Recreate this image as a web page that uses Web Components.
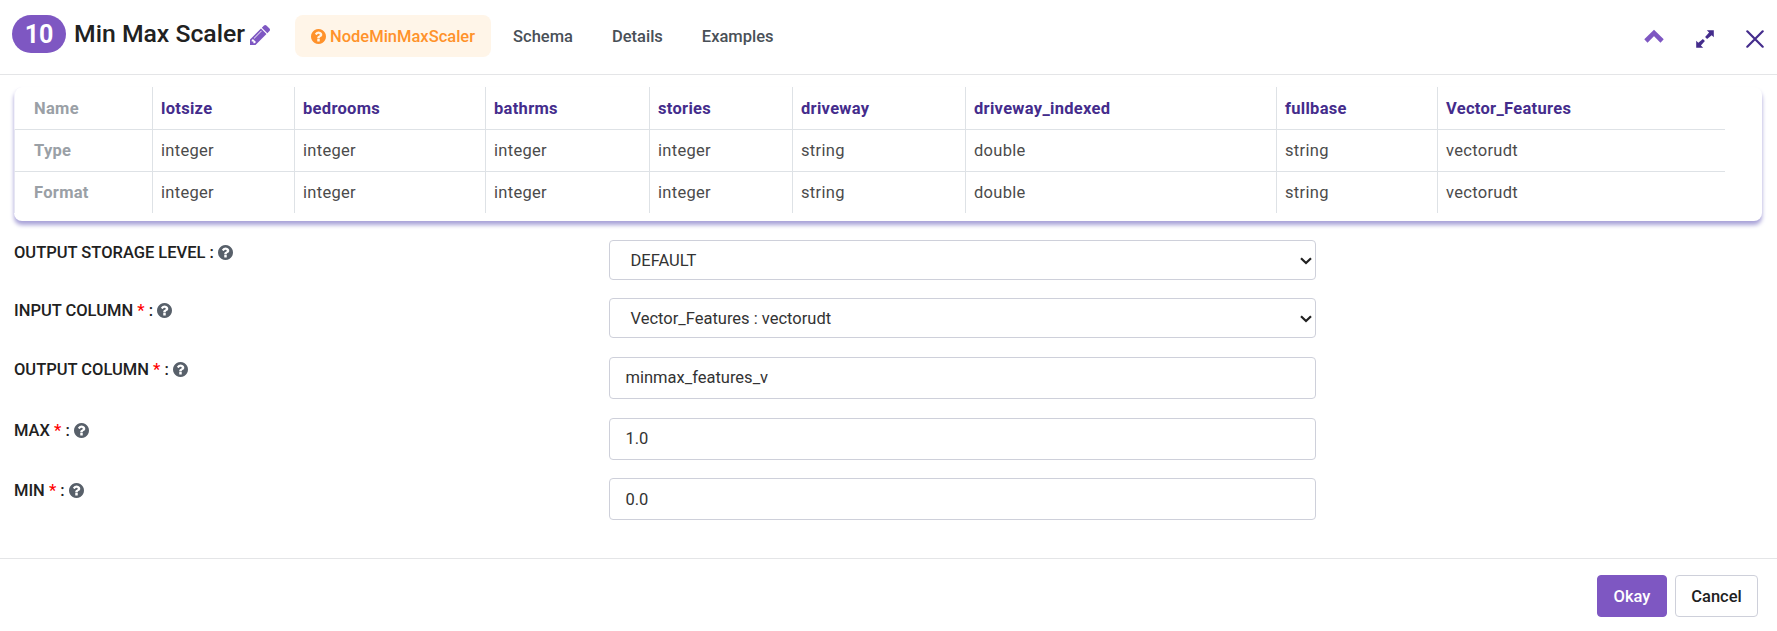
<!DOCTYPE html>
<html lang="en">
<head>
<meta charset="utf-8">
<title>Min Max Scaler</title>
<style>
  body { margin: 0; background: #fff; font-family: Roboto, "Liberation Sans", sans-serif; font-size: 16.5px; color: #212529; }
</style>
</head>
<body>
<node-dialog></node-dialog>
<script>
const define = (name, html, setup) => customElements.define(name, class extends HTMLElement {
  constructor() {
    super();
    this.attachShadow({ mode: 'open' }).innerHTML = html;
  }
  connectedCallback() { if (setup) setup(this, this.shadowRoot); }
});

const ICONS = {
  question: ['0 0 1536 1536', '<path fill="currentColor" transform="translate(-128 -128)" d="M1024 1376v-192q0-14-9-23t-23-9h-192q-14 0-23 9t-9 23v192q0 14 9 23t23 9h192q14 0 23-9t9-23zm256-672q0-88-55.500-163t-138.500-116-170-41q-243 0-371 213-15 24 8 42l132 100q7 6 19 6 16 0 25-12 53-68 86-92 34-24 86-24 48 0 85.500 26t37.500 59q0 38-20 61t-68 45q-63 28-115.500 86.500t-52.500 125.500v36q0 14 9 23t23 9h192q14 0 23-9t9-23q0-19 21.500-49.500t54.500-49.500q32-18 49-28.500t46-35 44.500-48 28-60.500 12.500-81zm384 192q0 209-103 385.500t-279.500 279.500-385.500 103-385.500-103-279.500-279.500-103-385.500 103-385.500 279.500-279.500 385.500-103 385.500 103 279.500 279.500 103 385.500z"/>'],
  pencil: ['128 149 1515 1515', '<path fill="currentColor" d="M491 1536l91-91-235-235-91 91v107h128v128h107zm523-928q0-22-22-22-10 0-17 7l-542 542q-7 7-7 17 0 22 22 22 10 0 17-7l542-542q7-7 7-17zm-54-192l416 416-832 832h-416v-416zm683 96q0 53-37 90l-166 166-416-416 166-165q36-38 90-38 53 0 91 38l235 234q37 39 37 91z"/>'],
  up: ['0 0 20 14', '<path fill="none" stroke="currentColor" stroke-width="4.6" d="M1.900 12 10 3.900 18.100 12"/>'],
  expand: ['0 0 18 18', '<path fill="currentColor" d="M10.800 .3H17.800V7.300L15.700 5.200 11.100 9 9.100 7 13.100 2.600ZM7.200 17.700H.2V10.700L2.300 12.800 6.900 9 8.900 11 4.900 15.400Z"/>'],
  close: ['0 0 18 18', '<path fill="none" stroke="currentColor" stroke-width="2.200" stroke-linecap="round" d="M1.300 1.300 16.700 16.700M16.700 1.300 1.300 16.700"/>'],
  caret: ['0 0 12 8', '<path fill="none" stroke="currentColor" stroke-width="2.200" d="M1 1.200 6 6 11 1.200"/>']
};

define('ui-icon', `<style>
  :host { display: inline-block; flex: none; width: 15px; height: 15px; }
  svg { display: block; width: 100%; height: 100%; }
</style><svg></svg>`, (el, root) => {
  const [box, body] = ICONS[el.getAttribute('name')];
  const svg = root.querySelector('svg');
  svg.setAttribute('viewBox', box);
  svg.innerHTML = body;
});

define('nav-tab', `<style>
  :host { display: flex; align-items: center; box-sizing: border-box; height: 42px; padding: 0 17px; margin-right: 5px;
    border-radius: 8px; font-weight: 500; color: #495057; gap: 4px; white-space: nowrap; }
  :host([active]) { background: #fff5e8; color: #ff922b; padding: 0 16px; }
</style><slot></slot>`);

define('dialog-header', `<style>
  :host { display: flex; box-sizing: border-box; height: 75px; border-bottom: 1px solid #e4e5e7; padding: 15px 13px 0 12px; align-items: flex-start; }
  .badge { width: 54px; height: 38px; border-radius: 19px; background: #7e57c2; color: #fff; font-size: 25px; font-weight: 700;
    line-height: 39px; text-align: center; }
  .title { margin: 0 0 0 8px; width: 175px; font-size: 24.75px; font-weight: 500; line-height: 38px; color: #212121; white-space: nowrap; }
  .pencil { width: 20px; height: 20px; margin: 10px 25px 0 1px; color: #7e57c2; }
  nav { display: flex; }
  .tools { margin-left: auto; display: flex; align-items: center; height: 48px; color: #442c8c; }
  .up { width: 20px; height: 14px; color: #7e57c2; margin: -6px 32px 0 0; }
  .expand { width: 18px; height: 18px; margin-right: 32px; }
  .close { width: 18px; height: 18px; }
</style>
<span class="badge">10</span><h1 class="title">Min Max Scaler</h1><ui-icon class="pencil" name="pencil"></ui-icon>
<nav><nav-tab active><ui-icon name="question"></ui-icon>NodeMinMaxScaler</nav-tab><nav-tab>Schema</nav-tab><nav-tab>Details</nav-tab><nav-tab>Examples</nav-tab></nav>
<div class="tools"><ui-icon class="up" name="up"></ui-icon><ui-icon class="expand" name="expand"></ui-icon><ui-icon class="close" name="close"></ui-icon></div>`);

define('schema-table', `<style>
  :host { display: block; box-sizing: border-box; margin: 12px 15px 0 14px; height: 134px; border-radius: 8px; box-shadow: 0 4px 4px #a9a3d8; letter-spacing: .3px; }
  .grid { display: grid; grid-template-columns: 138px 142px 191px 164px 143px 173px 311px 161px 288px; grid-template-rows: 43px 42px 41px; width: 1711px; color: #4b4b4b; }
  .grid > span { box-sizing: border-box; padding: 0 0 0 8px; border-left: 1px solid #dee2e6; border-bottom: 1px solid #dee2e6; line-height: 41px; white-space: nowrap; }
  .grid > .h { font-weight: 700; color: #442c8c; line-height: 43px; }
  .grid > .k { border-left-color: #e6e6f2; padding-left: 19px; font-weight: 700; color: #9aa0a6; }
  .grid > .k.h { border-top-left-radius: 8px; border-left-color: #f3f2fa; }
  .grid > .last { border-bottom: 0; }
</style><div class="grid"></div>`, (el, root) => {
  const names = ['lotsize', 'bedrooms', 'bathrms', 'stories', 'driveway', 'driveway_indexed', 'fullbase', 'Vector_Features'];
  const types = ['integer', 'integer', 'integer', 'integer', 'string', 'double', 'string', 'vectorudt'];
  const row = (key, cells, cls) => `<span class="k ${cls}">${key}</span>` + cells.map(c => `<span class="${cls}">${c}</span>`).join('');
  root.querySelector('.grid').innerHTML = row('Name', names, 'h') + row('Type', types, 't') + row('Format', types, 'last');
});

define('form-row', `<style>
  :host { display: flex; align-items: flex-start; margin-left: 14px; }
  .label { width: 595px; display: flex; align-items: center; height: 24px; font-weight: 500; color: #212121; white-space: pre; }
  .label ui-icon { margin-left: 4px; color: #58606a; }
  i { font-style: normal; color: #f00; }
  .box { box-sizing: border-box; width: 707px; height: 42px; border: 1px solid #ced0da; border-radius: 4px; padding: 0 3px 1px 15.5px;
    display: flex; align-items: center; justify-content: space-between; color: #333; }
  :host(:last-child) .box { padding-bottom: 0; }
  :host([kind=select]) .box { height: 40px; padding: 0 3px 0 20.5px; }
  .caret { width: 12px; height: 8px; color: #212121; margin-top: 1px; }
</style><div class="label"></div><div class="box"><slot></slot></div>`, (el, root) => {
  const req = el.hasAttribute('required') ? ' <i>*</i>' : '';
  root.querySelector('.label').innerHTML = `<span>${el.getAttribute('label')}${req} :</span><ui-icon name="question"></ui-icon>`;
  if (el.getAttribute('kind') === 'select') root.querySelector('.box').insertAdjacentHTML('beforeend', '<ui-icon class="caret" name="caret"></ui-icon>');
});

define('ui-button', `<style>
  :host { display: flex; align-items: center; justify-content: center; box-sizing: border-box; height: 42px; width: 83px;
    border: 1px solid #ced0da; border-radius: 4px; font-weight: 500; color: #212121; }
  :host([primary]) { width: 70px; background: #7e57c2; border-color: #7e57c2; color: #fff; }
</style><slot></slot>`);

define('node-dialog', `<style>
  :host { display: flex; flex-direction: column; height: 631px; overflow: hidden; }
  form { display: grid; grid-template-rows: 58px 59px 61px 60px 42px; margin-top: 19px; }
  footer { margin-top: auto; box-sizing: border-box; height: 73px; border-top: 1px solid #e4e5e7; display: flex; justify-content: flex-end; gap: 8px; padding: 16px 19px 0 0; }
</style>
<dialog-header></dialog-header>
<schema-table></schema-table>
<form>
  <form-row kind="select" label="OUTPUT STORAGE LEVEL">DEFAULT</form-row>
  <form-row kind="select" label="INPUT COLUMN" required>Vector_Features : vectorudt</form-row>
  <form-row label="OUTPUT COLUMN" required>minmax_features_v</form-row>
  <form-row label="MAX" required>1.0</form-row>
  <form-row label="MIN" required>0.0</form-row>
</form>
<footer><ui-button primary>Okay</ui-button><ui-button>Cancel</ui-button></footer>`);
</script>
</body>
</html>
